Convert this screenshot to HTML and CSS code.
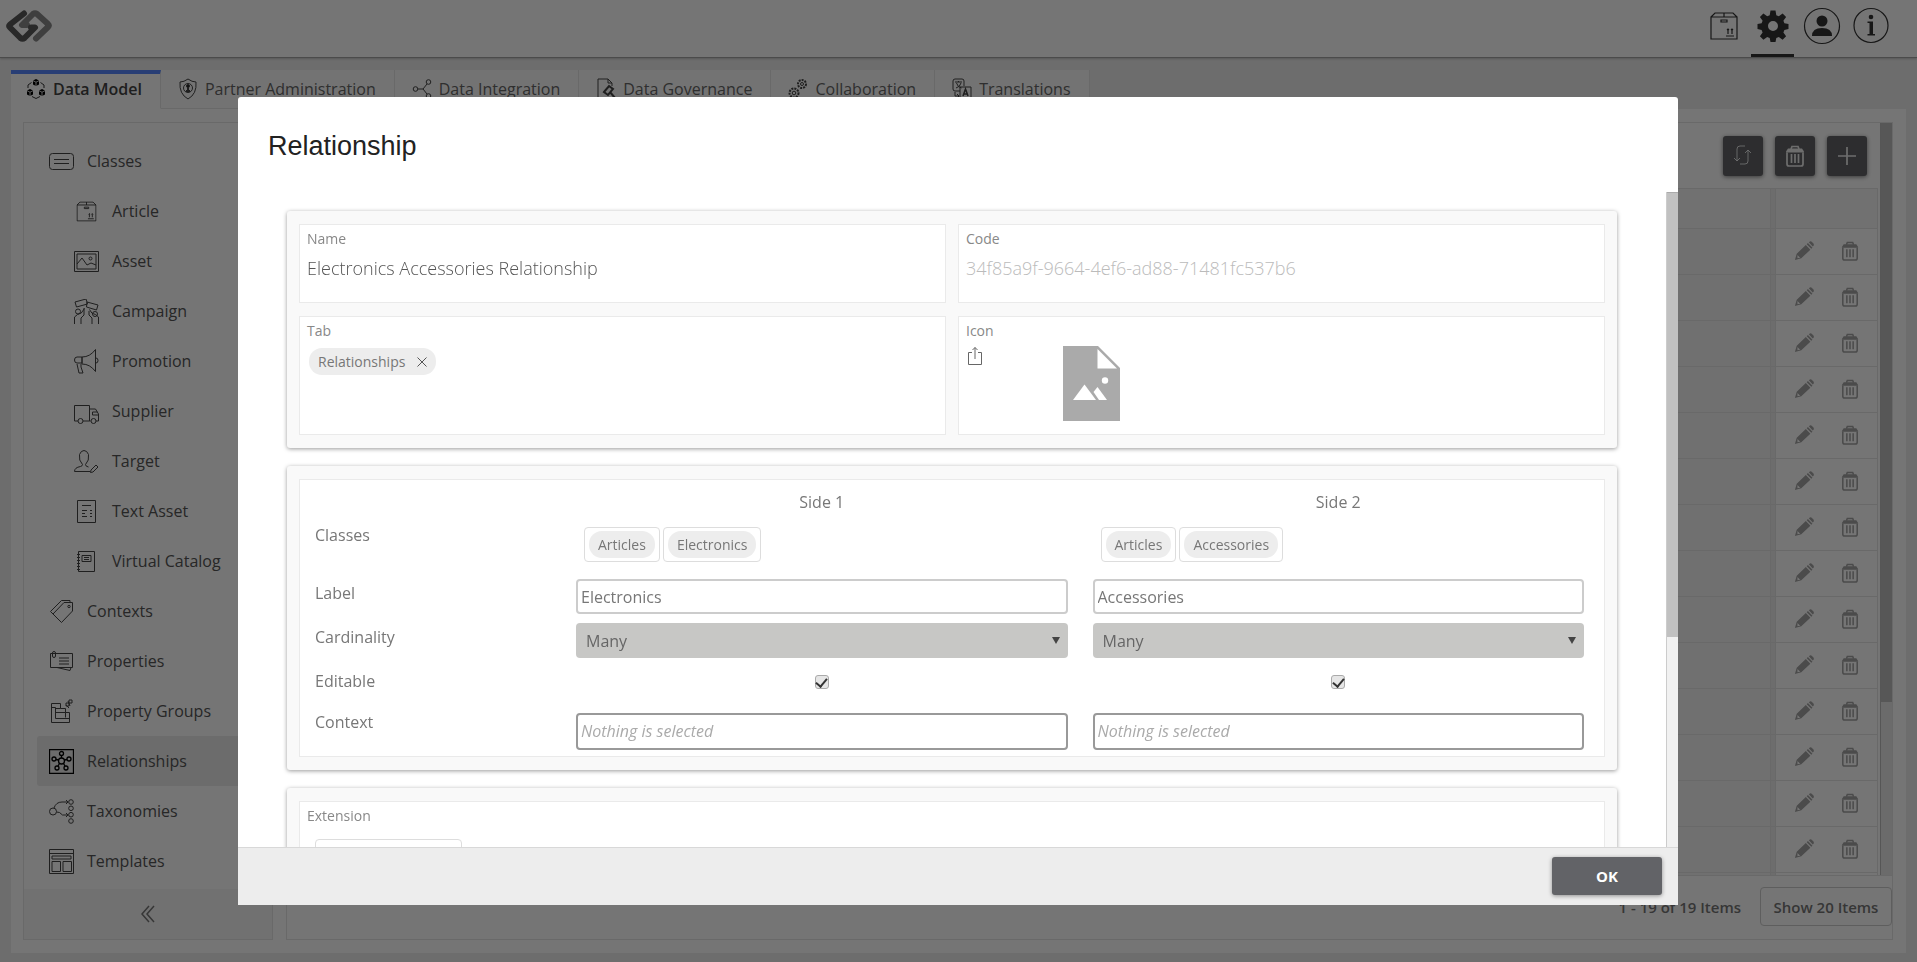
FILE: index.html
```html
<!DOCTYPE html>
<html lang="en">
<head>
    <meta charset="UTF-8">
    <title>Relationships</title>
    <link rel="stylesheet" href="styles.css">
</head>
<body>
    <!-- shared icons -->
    <svg class="sprite" aria-hidden="true">
        <symbol id="i-box" viewBox="0 0 28 28">
            <path d="M1 5h26v22H1zM1 5l4-4h18l4 4M14 1v4M11 8h6v2h-6zM16 24h8M18 22v-5M22 22v-5M17 18l1-1 1 1M21 18l1-1 1 1"/>
        </symbol>
        <symbol id="i-trash" viewBox="0 0 20 22">
            <path d="M2 7.500v11.500a2 2 0 0 0 2 2h12a2 2 0 0 0 2-2V7.500M6.500 9v9M10 9v9M13.500 9v9M6 4l1-2.500h6L14 4" fill="none" stroke="currentColor" stroke-width="1.700"/>
            <path d="M3 3.500h14l2 3v1H1v-1z" fill="currentColor"/>
        </symbol>
        <symbol id="i-pencil" viewBox="0 0 22 22">
            <path d="M1 21l2-7L13 4.500l5 5L8 19zM14 3.500l1.300-1.200 5 5L19 8.500zM16.300 1.500l.7-.7q1.500-1 3 .5l1.200 1.200q1.300 1.500 0 3l-.6.500z" fill="currentColor"/>
            <path d="M3.800 15.500l3 3-3 .6z" fill="#fff"/>
        </symbol>
    </svg>

    <div class="app">
        <header class="header">
            <svg class="logo" viewBox="0 0 46 34">
                <path d="M30 29.500L42 18q1.500-1.500 0-3L31 5q-2-1.500-4 0L16 16h5" stroke="#8a8a8a"/>
                <path d="M18 4.500L4 15.500q-1.500 1.500 0 3L14.500 29q2 1.500 4 0L29 18.500h-4" stroke="#595959"/>
            </svg>
            <nav class="header-nav">
                <button type="button" aria-label="Articles"><svg class="line bold" width="28" height="28"><use href="#i-box"/></svg></button>
                <button type="button" class="active" aria-label="Settings">
                    <svg width="32" height="32" viewBox="0 0 32 32"><path fill="#333" fill-rule="evenodd" d="M13.500 0.500h5l.8 4.700 2.500 1 3.800-2.700 3.500 3.500-2.700 3.800 1 2.500 4.100.8v5l-4.100.8-1 2.500 2.700 3.800-3.500 3.500-3.800-2.700-2.500 1-.8 4h-5l-.8-4-2.500-1-3.800 2.700-3.500-3.500 2.700-3.800-1-2.500-4.100-.8v-5l4.100-.8 1-2.500L2.900 7l3.500-3.500 3.800 2.700 2.500-1zM16 11a5 5 0 1 0 0 10 5 5 0 0 0 0-10z"/></svg>
                </button>
                <button type="button" aria-label="Profile">
                    <svg width="38" height="38" viewBox="0 0 38 38"><circle cx="19" cy="19" r="17.500" fill="none" stroke="#333" stroke-width="1.200"/><circle cx="19" cy="14" r="5.500" fill="#333"/><path d="M9 29q0-8 10-8t10 8z" fill="#333"/></svg>
                </button>
                <button type="button" aria-label="Information">
                    <svg width="38" height="38" viewBox="0 0 38 38"><circle cx="19" cy="18.500" r="17" fill="none" stroke="#333" stroke-width="1.200"/><circle cx="19" cy="10" r="2.300" fill="#333"/><path d="M15.500 14.500h5.500v12.500h2v1.500h-7.500v-1.500h2v-11h-2z" fill="#333"/></svg>
                </button>
            </nav>
        </header>

        <nav class="tabs">
            <a href="#" class="tab active">
                <svg class="solid" width="20" height="22" viewBox="0 0 20 22"><path d="M10 1l3 1.500v4L10 8 7 6.500v-4zM4 11l3 1.500v4L4 18l-3-1.500v-4zM16 11l3 1.500v4L16 18l-3-1.500v-4z"/><path d="M5.500 4.500L2 7v3M14.500 4.500L18 7v3M6 18.500l4 2 4-2" fill="none" stroke="#333"/><path d="M7 2.700L10 4.200l3-1.500M10 4.200V8M1 12.700l3 1.500 3-1.500M4 14.200V18M13 12.700l3 1.500 3-1.500M16 14.200V18" stroke="#fff" fill="none" stroke-width=".8"/></svg>
                Data Model
            </a>
            <a href="#" class="tab">
                <svg class="line" width="20" height="22" viewBox="0 0 20 22"><path d="M10 1q4 3 8 3 1 12-8 17Q1 16 2 4q4 0 8-3z"/><circle cx="10" cy="10" r="4.500"/><circle cx="10" cy="8" r="1.500" fill="#222"/><path d="M10 9v4M8 13h4" stroke-width="2"/></svg>
                Partner Administration
            </a>
            <a href="#" class="tab">
                <svg class="line" width="20" height="22" viewBox="0 0 20 22"><circle cx="3.500" cy="11" r="2.300"/><circle cx="16.500" cy="4" r="2.300"/><circle cx="16.500" cy="18" r="2.300"/><path d="M6 11h5l4-5M11 11l4 5"/></svg>
                Data Integration
            </a>
            <a href="#" class="tab">
                <svg class="line" width="20" height="22" viewBox="0 0 20 22"><path d="M16 8V5l-4-4H2v20h10M12 1v4h4"/><path d="M8 14l5-6 4 3-5 6zM14 14l5 6" stroke-width="2"/></svg>
                Data Governance
            </a>
            <a href="#" class="tab">
                <svg class="line" width="20" height="22" viewBox="0 0 20 22"><circle cx="14" cy="6" r="4" stroke-width="2" stroke-dasharray="2 1"/><circle cx="14" cy="6" r="1.500"/><circle cx="6" cy="15" r="4.500" stroke-width="2" stroke-dasharray="2 1"/><circle cx="6" cy="15" r="1.800"/></svg>
                Collaboration
            </a>
            <a href="#" class="tab">
                <svg class="line" width="20" height="22" viewBox="0 0 20 22"><path d="M8 13H3a2 2 0 0 1-2-2V3a2 2 0 0 1 2-2h7a2 2 0 0 1 2 2v5M3 4h7M6.500 3v1M4.500 5q1 4 5 5M9 5q-1 4-5 5M8 9h11v12H8zM3 14v4h4M5 16l2 2-2 2"/><path d="M11 18l2.500-7 2.500 7M12 16h3" stroke-width="1.500"/></svg>
                Translations
            </a>
        </nav>

        <div class="content">
            <aside class="sidebar">
                <ul class="menu">
                    <li><a href="#"><svg class="line" viewBox="0 0 25 25"><rect x=".5" y="4.500" width="24" height="16" rx="3"/><path d="M5 10.500h15M5 14.500h15"/></svg>Classes</a></li>
                    <li class="child"><a href="#"><svg class="line bold" viewBox="-3 -3 32 32"><use href="#i-box" width="26" height="26"/></svg>Article</a></li>
                    <li class="child"><a href="#"><svg class="line" viewBox="0 0 25 25"><path d="M.5 2.500h24v20H.5zM3 5h19v15H3zM3 15l5-6 5 7 4-2 5 2"/><circle cx="16.500" cy="9.500" r="1.500"/></svg>Asset</a></li>
                    <li class="child"><a href="#"><svg class="line" viewBox="0 0 25 25"><path d="M1 3l11-3 1.500 5-11 3zM13 3l11 3-1.500 5-10-3zM.5 25v-7l3-2.500q4 0 7-6M7 25v-6l3-3V9M24.500 25v-7l-3-2.500q-4 0-6-5M18 25v-6l-3-3v-4"/><circle cx="4" cy="12.500" r="2.500"/><circle cx="21" cy="15" r="2.500"/></svg>Campaign</a></li>
                    <li class="child"><a href="#"><svg class="line" viewBox="0 0 25 25"><path d="M8 8H3Q.5 8 .5 11t2.500 3h5zM8 8q8 0 13.500-7.500v22Q16 15 8 15zM3 15l2 9h4l-2-6V15M22 9q2 0 2 2.500T22 14"/></svg>Promotion</a></li>
                    <li class="child"><a href="#"><svg class="line" viewBox="0 0 25 25"><path d="M4 22H.5V6.500h15V22H9M15.500 10h6l3 5v7H22M15.500 22h1M24.500 16h-6v-3h5"/><circle cx="6.500" cy="22" r="2.500"/><circle cx="19.500" cy="22" r="2.500"/></svg>Supplier</a></li>
                    <li class="child"><a href="#"><svg class="line" viewBox="0 0 25 25"><path d="M16 22.500H.5q0-4 6-5 2-.5 2-2-4-4-3-10Q7 1.500 10 1.500t4.500 4q1 6-3 10 0 2 3 2.500M17 21l5-5 2 2-5 5-2.500.5z"/></svg>Target</a></li>
                    <li class="child"><a href="#"><svg class="line" viewBox="0 0 25 25"><path d="M3.500 1.500h18v22h-18zM8 6.500h9M8 11.500h5M8 14.500h3M8 17.500h5M16 11.500h2M16 14.500h2M16 17.500h2"/></svg>Text Asset</a></li>
                    <li class="child"><a href="#"><svg class="line" viewBox="0 0 25 25"><path d="M4.500 2.500h16v20h-16zM8 6.500h9v6H8zM10 8.500h5M10 10.500h5M3 5.500h3M3 8.500h3M3 11.500h3M3 14.500h3M3 17.500h3M3 20.500h3"/></svg>Virtual Catalog</a></li>
                    <li><a href="#"><svg class="line" viewBox="0 0 25 25"><path d="M4 15L15 3.500h8.500V12L12.500 23.500zM4 15l-2.500-2.500 11-11H21v2"/><circle cx="20" cy="7.500" r="1.200"/></svg>Contexts</a></li>
                    <li><a href="#"><svg class="line" viewBox="0 0 25 25"><path d="M1.500 4.500h22v14h-22zM8 18.500l13 3 1-3M10 9h10M10 12h10M10 15h10"/><rect x="3.500" y="2.500" width="3" height="6" rx="1.500"/></svg>Properties</a></li>
                    <li><a href="#"><svg class="line" viewBox="0 0 25 25"><path d="M2.500 4.500h9v5h5v4h4v10h-18zM2.500 8.500h4v11h14M6.500 9.500h5M6.500 13.500h10v5M19 2l2 5M17 6l3 3M20 1h3v3h-3zM17 4h3v3h-3z"/></svg>Property Groups</a></li>
                    <li class="selected"><a href="#"><svg class="line" viewBox="0 0 25 25"><path d="M.5.500h24v24H.5z"/><circle cx="12.500" cy="12" r="3"/><circle cx="12.500" cy="4.500" r="2"/><circle cx="5" cy="10" r="2"/><circle cx="20" cy="10" r="2"/><circle cx="8" cy="19" r="2"/><circle cx="17" cy="19" r="2"/><path d="M12.500 6.500V9M7 10.500l2.500.5M18 10.500l-2.500.5M9 17l1.500-2.500M16 17l-1.500-2.500"/></svg>Relationships</a></li>
                    <li><a href="#"><svg class="line" viewBox="0 0 25 25"><circle cx="4" cy="12.500" r="3.500"/><circle cx="22" cy="3" r="2.300"/><circle cx="22" cy="9.300" r="2.300"/><circle cx="22" cy="15.700" r="2.300"/><circle cx="22" cy="22" r="2.300"/><path d="M5 9q2-6 8-6h6M17 1l2 2-2 2M7.500 13l3 .5 3 2.500h6M17 14l2 2-2 2"/></svg>Taxonomies</a></li>
                    <li><a href="#"><svg class="line" viewBox="0 0 25 25"><path d="M.5.500h24v24H.5zM.5 4.500h24M3 7h19v3H3zM3 12.500h8.500v10H3zM14 12.500h8.500v10H14z"/></svg>Templates</a></li>
                </ul>
                <button type="button" class="collapse" aria-label="Collapse menu">
                    <svg width="16" height="18" viewBox="0 0 16 18"><path d="M9 1L2 9l7 8M14 1L7 9l7 8" fill="none" stroke="#777" stroke-width="1.500"/></svg>
                </button>
            </aside>

            <main class="main">
                <div class="list">
                    <div class="list-body">
                        <div class="toolbar">
                            <button type="button" aria-label="Refresh"><svg width="20" height="22" viewBox="0 0 20 22"><path d="M12 1H7Q4 1 4 4v12M1 13l3 3 3-3M7 19h5q3 0 3-3V5M12 8l3-3 3 3" fill="none" stroke="#fff" stroke-opacity=".8"/></svg></button>
                            <button type="button" aria-label="Delete"><svg width="20" height="22"><use href="#i-trash"/></svg></button>
                            <button type="button" aria-label="Add"><svg width="20" height="20" viewBox="0 0 20 20"><path d="M10 1v18M1 10h18" stroke="#eee" stroke-width="1.700"/></svg></button>
                        </div>
                        <div class="table-wrap">
                            <table>
                                <thead><tr><th></th><th class="gap"></th><th class="actions"></th></tr></thead>
                                <tbody id="rows"></tbody>
                            </table>
                        </div>
                    </div>
                    <div class="list-scroll"><div class="list-thumb"></div></div>
                </div>
                <div class="pager">
                    <span>1 - 19 of 19 Items</span>
                    <button type="button">Show 20 Items</button>
                </div>
            </main>
        </div>
    </div>

    <div class="overlay">
        <div class="modal" role="dialog" aria-labelledby="modalTitle">
            <h1 id="modalTitle">Relationship</h1>
            <div class="modal-body">
                <form class="modal-form">
                    <section class="card fields">
                        <div class="cell">
                            <label for="name">Name</label>
                            <input id="name" class="plain" type="text" value="Electronics Accessories Relationship">
                        </div>
                        <div class="cell">
                            <label for="code">Code</label>
                            <input id="code" class="plain" type="text" value="34f85a9f-9664-4ef6-ad88-71481fc537b6" disabled>
                        </div>
                        <div class="cell tall">
                            <span class="caption">Tab</span>
                            <span class="chip removable">Relationships
                                <button type="button" aria-label="Remove"><svg width="10" height="10" viewBox="0 0 10 10"><path d="M.5.500l9 9M9.500.500l-9 9" stroke="#555"/></svg></button>
                            </span>
                        </div>
                        <div class="cell tall">
                            <span class="caption">Icon</span>
                            <div class="icon-row">
                                <button type="button" aria-label="Upload icon"><svg width="16" height="20" viewBox="0 0 16 20"><path d="M5 6.500H1.500v12h13v-12H11M8 13V1.500M5.500 4L8 1.500 10.500 4" fill="none" stroke="#666"/></svg></button>
                                <svg width="57" height="75" viewBox="0 0 57 75"><path d="M0 0h35l22 22v53H0z" fill="#aaa"/><path d="M34.500 3v19.500H54z" fill="#fff"/><path d="M10 54l11.500-15.500L33 54z" fill="#fff"/><path d="M30.500 46l4-5L44 54h-8z" fill="#fff"/><circle cx="42" cy="34.500" r="3.200" fill="#fff"/></svg>
                            </div>
                        </div>
                    </section>

                    <section class="card">
                        <div class="sides">
                            <span></span>
                            <span class="side-title">Side 1</span>
                            <span class="side-title">Side 2</span>

                            <span class="row-label classes-row">Classes</span>
                            <div class="chips classes-row">
                                <span class="chip-box"><span class="chip">Articles</span></span>
                                <span class="chip-box"><span class="chip">Electronics</span></span>
                            </div>
                            <div class="chips classes-row">
                                <span class="chip-box"><span class="chip">Articles</span></span>
                                <span class="chip-box"><span class="chip">Accessories</span></span>
                            </div>

                            <span class="row-label">Label</span>
                            <input type="text" class="box" aria-label="Side 1 label" value="Electronics">
                            <input type="text" class="box" aria-label="Side 2 label" value="Accessories">

                            <span class="row-label">Cardinality</span>
                            <div class="select"><select aria-label="Side 1 cardinality"><option>Many</option><option>One</option></select></div>
                            <div class="select"><select aria-label="Side 2 cardinality"><option>Many</option><option>One</option></select></div>

                            <span class="row-label">Editable</span>
                            <div class="check"><input type="checkbox" aria-label="Side 1 editable" checked></div>
                            <div class="check"><input type="checkbox" aria-label="Side 2 editable" checked></div>

                            <span class="row-label context-label">Context</span>
                            <input type="text" class="box context" aria-label="Side 1 context" placeholder="Nothing is selected">
                            <input type="text" class="box context" aria-label="Side 2 context" placeholder="Nothing is selected">
                        </div>
                    </section>

                    <section class="card">
                        <div class="cell extension">
                            <span class="caption">Extension</span>
                            <div class="extension-box"></div>
                        </div>
                    </section>
                </form>
                <div class="modal-scroll"><div class="modal-thumb"></div></div>
            </div>
            <footer class="modal-footer"><button type="button">OK</button></footer>
        </div>
    </div>

    <script>
        // render list rows
        const ROW_COUNT = 19;
        document.getElementById('rows').innerHTML = Array.from({length: ROW_COUNT}, () => `
            <tr>
                <td class="name"></td>
                <td class="gap"></td>
                <td class="actions">
                    <div>
                        <button type="button" aria-label="Edit"><svg width="20" height="20"><use href="#i-pencil"/></svg></button>
                        <button type="button" aria-label="Delete"><svg width="18" height="20"><use href="#i-trash"/></svg></button>
                    </div>
                </td>
            </tr>
        `).join('');
    </script>
</body>
</html>
```
FILE: styles.css
```css
:root {
    --page: #ededed;
    --line: #e4e4e4;
    --dark: #626367;
    --text: #555;
}
* {
    box-sizing: border-box;
}
body {
    margin: 0;
    font-family: "Open Sans", sans-serif;
    font-size: 16px;
    color: var(--text);
    background: var(--page);
    overflow: hidden;
}
button {
    border: none;
    padding: 0;
    background: none;
    font-family: inherit;
    cursor: pointer;
}
input, select {
    font-family: inherit;
    color: #777;
}
svg {
    display: block;
    flex: none;
}
a {
    color: inherit;
    text-decoration: none;
}
.sprite {
    display: none;
}
.line {
    fill: none;
    stroke: #444;
    stroke-width: 1;
}
.line.bold {
    stroke: #333;
    stroke-width: 1.2;
}
.app {
    height: 100vh;
    display: flex;
    flex-direction: column;
}

/* header */
.header {
    flex: none;
    height: 58px;
    display: flex;
    justify-content: space-between;
    padding: 0 25px 0 6px;
    background: #fff;
    border-bottom: 1px solid #a3a3a3;
    box-shadow: 0 1px 2px rgba(0,0,0,0.2);
}
.logo {
    width: 46px;
    height: 34px;
    margin-top: 9px;
    fill: none;
    stroke-width: 6;
    stroke-linejoin: round;
    stroke-linecap: round;
}
.header-nav {
    display: flex;
    gap: 6px;
}
.header-nav button {
    width: 43px;
    height: 57px;
    padding-bottom: 2px;
    display: flex;
    align-items: center;
    justify-content: center;
    border-bottom: 3px solid transparent;
}
.header-nav .active {
    border-color: #333;
}

/* tabs */
.tabs {
    flex: none;
    display: flex;
    padding: 12px 11px 0;
}
.tab {
    height: 39px;
    display: flex;
    align-items: center;
    gap: 7px;
    padding: 0 18px 0 17px;
    background: #fbfbfb;
    border-right: 1px solid var(--line);
    border-bottom: 1px solid var(--line);
    color: #666;
}
.tab.active {
    background: #fff;
    border-top: 4px solid #5788ff;
    padding-left: 15px;
    padding-bottom: 4px;
    border-bottom-color: #fff;
    color: #444;
    font-weight: 600;
}

/* content */
.content {
    flex: 1;
    min-height: 0;
    display: flex;
    gap: 13px;
    margin: 0 11px 9px;
    padding: 13px;
    padding-left: 12px;
    background: #fff;
}
.sidebar {
    flex: none;
    width: 250px;
    display: flex;
    flex-direction: column;
    border: 1px solid var(--line);
}
.menu {
    flex: 1;
    min-height: 0;
    list-style: none;
    margin: 0;
    padding: 13px 0 0 13px;
}
.menu a {
    height: 50px;
    display: flex;
    align-items: center;
    gap: 13px;
    padding-left: 12px;
    border-radius: 3px 0 0 3px;
}
.menu .child a {
    padding-left: 37px;
}
.menu svg {
    width: 25px;
    height: 25px;
}
.menu .selected a {
    background: #ebebeb;
}
.menu .selected .line {
    stroke: #000;
    stroke-width: 1.3;
}
.collapse {
    height: 50px;
    display: flex;
    align-items: center;
    justify-content: center;
    background: #f6f6f6;
}
.main {
    flex: 1;
    min-width: 0;
    display: flex;
    flex-direction: column;
    border: 1px solid var(--line);
}
.list {
    flex: 1;
    min-height: 0;
    display: flex;
    gap: 2px;
    border-bottom: 1px solid var(--line);
}
.list-body {
    flex: 1;
    display: flex;
    flex-direction: column;
    min-width: 0;
}
.toolbar {
    flex: none;
    height: 66px;
    display: flex;
    align-items: center;
    justify-content: flex-end;
    gap: 12px;
    padding-right: 11px;
    border-bottom: 1px solid var(--line);
}
.toolbar button {
    width: 40px;
    height: 40px;
    display: flex;
    align-items: center;
    justify-content: center;
    border-radius: 3px;
    color: #eee;
    background: var(--dark);
    box-shadow: 0 1px 4px rgba(0,0,0,0.5);
}
.table-wrap {
    flex: 1;
    min-height: 0;
    overflow: hidden;
}
table {
    width: 100%;
    border-collapse: collapse;
    table-layout: fixed;
}
th, td {
    height: 46px;
    padding: 0;
    border-bottom: 1px solid var(--line);
    border-right: 1px solid var(--line);
}
th {
    height: 39px;
    background: #f6f6f6;
}
.name {
    background: #f3f3f3;
}
.gap {
    width: 5px;
    background: #eee;
}
.actions {
    width: 102px;
}
.actions div {
    display: flex;
    justify-content: center;
    gap: 27px;
}
.actions button {
    color: #a3a3a3;
}
.list-scroll {
    width: 12px;
    background: #eaeaea;
    border-left: 1px solid #bbb;
}
.list-thumb {
    height: 77%;
    background: #bdbdbd;
}
.pager {
    flex: none;
    height: 63px;
    display: flex;
    align-items: center;
    justify-content: flex-end;
    gap: 19px;
    padding-bottom: 2px;
    font-size: 15px;
    font-weight: 600;
    color: #777;
}
.pager button {
    width: 132px;
    height: 39px;
    border: 1px solid #ccc;
    border-radius: 4px;
    font-size: 15px;
    font-weight: 600;
    color: #777;
}

/* modal */
.overlay {
    position: fixed;
    inset: 0;
    display: flex;
    justify-content: center;
    align-items: flex-start;
    padding: 97px 1px 0 0;
    background: rgba(0,0,0,0.54);
}
.modal {
    width: 90%;
    max-width: 1440px;
    height: 84vh;
    display: flex;
    flex-direction: column;
    background: #fff;
    border-radius: 3px 3px 0 0;
}
.modal h1 {
    flex: none;
    margin: 0;
    padding: 33px 30px 30px;
    font-family: "Liberation Sans", Arial, sans-serif;
    font-size: 27px;
    font-weight: 400;
    line-height: 32px;
    color: #222;
}
.modal-body {
    flex: 1;
    min-height: 0;
    display: flex;
    overflow: hidden;
}
.modal-form {
    flex: 1;
    min-width: 0;
    padding: 19px 49px;
    color: #777;
}
.modal-scroll {
    width: 12px;
    background: #f1f1f1;
    border-left: 1px solid #ccc;
}
.modal-thumb {
    height: 68%;
    background: #c1c1c1;
    border-top: 1px solid #aaa;
}
.card {
    margin-bottom: 18px;
    padding: 13px 12px;
    background: #f9f9f9;
    border-radius: 3px;
    box-shadow: 0 1px 4px rgba(0,0,0,0.4);
}
.fields {
    display: grid;
    grid-template-columns: 1fr 1fr;
    gap: 13px 12px;
}
.cell {
    height: 79px;
    padding: 5px 7px;
    background: #fff;
    border: 1px solid #eaeaea;
}
.cell.tall {
    height: 119px;
}
.cell label, .caption {
    display: block;
    font-size: 14px;
    line-height: 18px;
    color: #888;
}
.plain {
    width: 100%;
    height: 28px;
    margin-top: 6px;
    padding: 0;
    border: none;
    background: none;
    font-size: 18px;
    font-weight: 300;
    color: #555;
}
.plain:disabled {
    color: #bbb;
}
.chip {
    display: inline-flex;
    align-items: center;
    height: 27px;
    padding: 0 9px;
    border-radius: 13px;
    background: #ededed;
    font-size: 14px;
}
.removable {
    gap: 12px;
    margin: 8px 2px;
}
.icon-row {
    display: flex;
    align-items: flex-start;
    gap: 80px;
    padding: 6px 1px;
}
.sides {
    display: grid;
    grid-template-columns: 236px 1fr 1fr;
    column-gap: 25px;
    row-gap: 9px;
    padding: 9px 20px 6px 15px;
    background: #fff;
    border: 1px solid #eaeaea;
}
.side-title {
    height: 29px;
    line-height: 26px;
    text-align: center;
}
.row-label {
    line-height: 28px;
}
.classes-row {
    margin-bottom: 8px;
    line-height: 16px;
}
.chips {
    display: flex;
    gap: 3px;
    padding-left: 8px;
}
.chip-box {
    height: 35px;
    padding: 3px 4px;
    border: 1px solid #ddd;
    border-radius: 4px;
}
.box {
    width: 100%;
    height: 35px;
    padding: 0 3px;
    border: 2px solid #ccc;
    border-radius: 4px;
    font-size: 16px;
}
.context-label {
    line-height: 18px;
}
.context {
    height: 37px;
    padding-bottom: 2px;
    border-color: #999;
}
.context::placeholder {
    font-style: italic;
    color: #aaa;
}
.select {
    position: relative;
}
.select::after {
    content: "";
    position: absolute;
    right: 8px;
    top: 14px;
    border: 4px solid transparent;
    border-top: 7px solid #444;
    border-bottom: none;
    pointer-events: none;
}
select {
    width: 100%;
    height: 35px;
    padding: 0 10px;
    appearance: none;
    border: none;
    border-radius: 4px;
    background: #c7c7c5;
    font-size: 16px;
    color: #666;
}
.check {
    height: 37px;
    display: flex;
    align-items: center;
    justify-content: center;
    padding-bottom: 8px;
}
.check input {
    width: 14px;
    height: 14px;
    margin: 0;
    appearance: none;
    border: 1px solid #aaa;
    border-radius: 3px;
    background: #e6e6e6;
}
.check input:checked::after {
    content: "";
    display: block;
    width: 5px;
    height: 9px;
    margin: 0 auto;
    border: solid #333;
    border-width: 0 2px 2px 0;
    transform: rotate(40deg);
}
.extension {
    height: 120px;
}
.extension-box {
    width: 147px;
    height: 35px;
    margin: 14px 8px;
    border: 1px solid #ddd;
    border-radius: 4px;
}
.modal-footer {
    flex: none;
    height: 58px;
    display: flex;
    align-items: center;
    justify-content: flex-end;
    padding: 0 16px 1px;
    background: #ededed;
    border-top: 1px solid #d8d8d8;
}
.modal-footer button {
    width: 110px;
    height: 38px;
    border-radius: 3px;
    background: var(--dark);
    color: #fff;
    font-size: 15px;
    font-weight: 700;
    box-shadow: 0 1px 4px rgba(0,0,0,0.4);
}
```
